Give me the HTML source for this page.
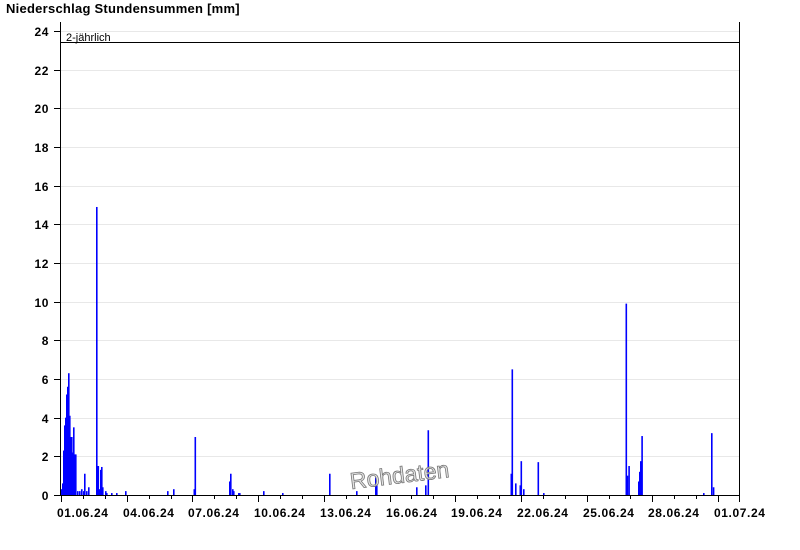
<!DOCTYPE html>
<html><head><meta charset="utf-8"><style>
html,body{margin:0;padding:0;background:#fff;width:800px;height:550px;overflow:hidden}
svg text{font-family:"Liberation Sans",Arial,sans-serif}
</style></head><body>
<svg width="800" height="550" viewBox="0 0 800 550" xmlns="http://www.w3.org/2000/svg">
<text x="6" y="13" font-size="13" font-weight="bold" fill="#000" letter-spacing="0.25">Niederschlag Stundensummen [mm]</text>
<g id="grid" stroke="#e8e8e8" stroke-width="1"></g>
<g id="bars" fill="#0000ff"></g>
<line x1="61" y1="42.5" x2="740" y2="42.5" stroke="#000" stroke-width="1"/>
<text x="66" y="41" font-size="11" fill="#000">2-jährlich</text>
<g id="axes" stroke="#000" stroke-width="1" fill="none"></g>
<g id="labels" font-size="12" font-weight="bold" fill="#000" letter-spacing="0.6"></g>
<text x="349" y="483" font-size="23" fill="#ddd" fill-opacity="0.8" stroke="#777" stroke-width="0.8" transform="rotate(-7 400 470)">Rohdaten</text>
</svg>
<script>
var ns="http://www.w3.org/2000/svg";
function el(p,t,a,txt){var e=document.createElementNS(ns,t);for(var k in a)e.setAttribute(k,a[k]);if(txt)e.textContent=txt;document.getElementById(p).appendChild(e);}
function Y(v){return 495-v*19.33;}
for(var v=0;v<=24;v+=2){var y=Math.round(Y(v))+0.5;
 if(v>0)el("grid","line",{x1:61,x2:740,y1:y,y2:y});
 el("axes","line",{x1:54,x2:60,y1:y,y2:y});
 el("labels","text",{x:49,y:y+4.5,"text-anchor":"end"},String(v));}
el("axes","line",{x1:60.5,x2:60.5,y1:22,y2:495});
el("axes","line",{x1:739.5,x2:739.5,y1:22,y2:502});
el("axes","line",{x1:60,x2:740,y1:495.5,y2:495.5});
var names=["01.06.24","04.06.24","07.06.24","10.06.24","13.06.24","16.06.24","19.06.24","22.06.24","25.06.24","28.06.24","01.07.24"];
for(var d=0;d<=30;d++){var x=Math.round(61+21.9*d)+0.5;var maj=d%3==0;
 el("axes","line",{x1:x,x2:x,y1:495,y2:maj?502:499});
 if(maj)el("labels","text",{x:x-4.5,y:517},names[d/3]);}
var b=[[61,.3],[62,.6],[63,2.3],[64,3.6],[65,4.0],[66,5.2],[67,5.6],[68,6.3],[69,4.1],[70,3.0],[71,3.0],[72,2.2],[73,3.5],[74,2.1],[75,2.1],[77,.2],[79,.2],[81,.3],[83,.2],[84,1.1],[86,.2],[88,.4],
[96,14.9],[97.5,1.5],[99,.3],[100,1.3],[101,1.45],[102,.4],[105,.2],[106,.1],[111,.1],[116,.1],[125,.2],[167,.2],[173,.3],[193.5,.3],[194.5,3.0],[229,.7],[230,1.1],[232,.3],[233,.2],[238,.1],[239,.1],
[263,.2],[282,.1],[329,1.1],[356,.2],[375,.9],[376,.5],[416,.4],[425,.5],[427.5,3.35],[510.5,1.1],[511.5,6.5],[515,.6],[519.5,.5],[520.5,1.75],[523,.3],[537.5,1.7],[543,.1],
[625.5,9.9],[626.7,1.0],[628.3,1.5],[638,.7],[639,1.2],[640,1.75],[641.3,3.05],[703,.1],[711,3.2],[712.8,.4]];
b.forEach(function(p){var y=Y(p[1]);el("bars","rect",{x:p[0],y:y,width:1.6,height:495-y});});
</script>
</body></html>
